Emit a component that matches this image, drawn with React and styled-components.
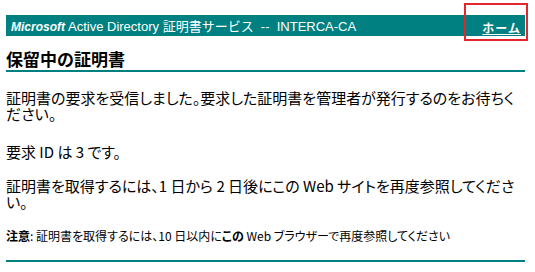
import React from "react";
import styled, { createGlobalStyle } from "styled-components";

const GlobalStyle = createGlobalStyle`
  html, body {
    margin: 0;
    padding: 0;
    background: #ffffff;
  }
  body {
    font-family: "Noto Sans CJK JP", "Liberation Sans", sans-serif;
    color: #000000;
  }
`;

const Page = styled.div`
  width: 519px;
  padding: 15px 0 0 6px;
`;

const Banner = styled.div`
  height: 21px;
  background: #008080;
  display: flex;
  align-items: center;
  justify-content: space-between;
  padding: 0 4px 0 5px;
  color: #ffffff;
`;

const Title = styled.div`
  display: flex;
  align-items: baseline;
  gap: 3px;
  font-size: 13px;
  white-space: nowrap;
`;

const Brand = styled.span`
  font-family: "Liberation Sans", Arial, sans-serif;
  font-weight: bold;
  font-style: italic;
  font-size: 12px;
`;

const Plain = styled.span`
  font-family: "Liberation Sans", "Noto Sans CJK JP", sans-serif;
  font-size: 13px;
`;

const HomeCell = styled.div`
  position: relative;
`;

const HomeLink = styled.a`
  color: #ffffff;
  font-weight: bold;
  font-size: 12px;
  text-decoration: underline;
  letter-spacing: 1px;
`;

const Highlight = styled.span`
  position: absolute;
  left: -18px;
  top: -11px;
  width: 60px;
  height: 34px;
  border: 2px solid #e3262b;
  pointer-events: none;
`;

const Heading = styled.h2`
  margin: 13px 0 0;
  padding-bottom: 1px;
  font-size: 17px;
  line-height: 20px;
  font-weight: bold;
  border-bottom: 2px solid #008080;
`;

const Para = styled.p`
  margin: ${({ gap }) => gap}px 0 0;
  font-size: ${({ small }) => (small ? 12 : 15)}px;
  line-height: ${({ small }) => (small ? 14 : 16)}px;
  font-feature-settings: "palt";
`;

const Strong = styled.b`
  font-weight: bold;
`;

const Rule = styled.div`
  margin-top: 17px;
  height: 2px;
  background: #008080;
`;

export default function App() {
  return (
    <>
      <GlobalStyle />
      <Page>
        <Banner>
          <Title>
            <Brand>Microsoft</Brand>
            <Plain>Active Directory 証明書サービス&nbsp; --&nbsp; INTERCA-CA</Plain>
          </Title>
          <HomeCell>
            <HomeLink href="#">ホーム</HomeLink>
            <Highlight />
          </HomeCell>
        </Banner>
        <Heading>保留中の証明書</Heading>
        <Para gap={18}>
          証明書の要求を受信しました。要求した証明書を管理者が発行するのをお待ちください。
        </Para>
        <Para gap={22}>要求 ID は 3 です。</Para>
        <Para gap={18}>
          証明書を取得するには、1 日から 2 日後にこの Web サイトを再度参照してください。
        </Para>
        <Para gap={19} small>
          <Strong>注意</Strong>: 証明書を取得するには、10 日以内に<Strong>この</Strong> Web ブラウザーで再度参照してください
        </Para>
        <Rule />
      </Page>
    </>
  );
}
